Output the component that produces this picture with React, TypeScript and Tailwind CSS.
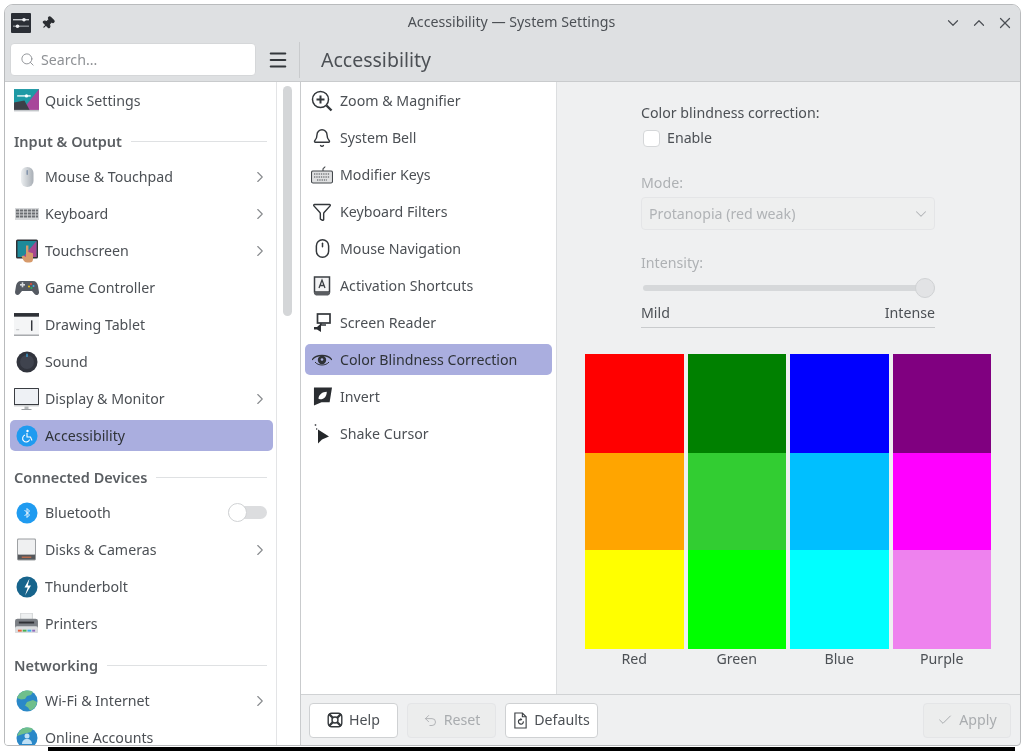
import React from 'react';
import { Search, Menu, Pin, ChevronRight, ChevronDown, ChevronUp, X, Undo2, Check, Bell, Funnel, Mouse } from 'lucide-react';

const ic = 'w-[22px] h-[22px]';

const SettingsLogo = () => (
  <svg viewBox="0 0 20 20" className="w-[20px] h-[20px]">
    <rect width="20" height="20" rx="1" fill="#2a2e35" />
    <rect x="2" y="6" width="16" height="1.4" fill="#c9ccd0" />
    <circle cx="13" cy="6.7" r="1.8" fill="#eef0f2" />
    <rect x="2" y="12.5" width="16" height="1.4" fill="#8b8f95" />
    <circle cx="6.5" cy="13.2" r="1.8" fill="#eef0f2" />
  </svg>
);

const QuickIcon = () => (
  <svg viewBox="0 0 24 22" className="w-[25px] h-[23px]">
    <rect x="0" y="0" width="24" height="20" fill="#1e9aa5" />
    <path d="M24 0V20H8Z" fill="#a8479a" />
    <path d="M0 13L10 11L15 20H0Z" fill="#3c4048" />
    <rect x="3" y="6" width="13" height="1.2" fill="#fff" />
    <circle cx="12" cy="6.6" r="1.6" fill="#fff" />
    <rect x="0" y="20" width="24" height="1.5" fill="#c3c7ca" />
  </svg>
);

const MouseIcon = () => (
  <svg viewBox="0 0 22 22" className={ic}>
    <defs>
      <linearGradient id="mg" x1="0" x2="1" y1="0" y2="0">
        <stop offset="0" stopColor="#eceff1" />
        <stop offset="1" stopColor="#a9afb6" />
      </linearGradient>
    </defs>
    <rect x="5" y="1" width="12.5" height="20" rx="6" fill="url(#mg)" />
    <rect x="10.5" y="4" width="1.4" height="5" rx="0.7" fill="#7d8fa8" />
  </svg>
);

const KeyboardIcon = () => (
  <svg viewBox="0 0 24 22" className="w-[24px] h-[22px]">
    <rect x="0" y="5" width="24" height="12" fill="#d5d7d9" />
    <g fill="#6a6d71">
      <rect x="1" y="6.5" width="22" height="2" />
      <rect x="1" y="9.5" width="22" height="2" />
      <rect x="1" y="12.5" width="22" height="2" />
    </g>
    <g fill="#d5d7d9">
      <rect x="4" y="6" width="0.8" height="9" />
      <rect x="8" y="6" width="0.8" height="9" />
      <rect x="12" y="6" width="0.8" height="9" />
      <rect x="16" y="6" width="0.8" height="9" />
      <rect x="20" y="6" width="0.8" height="9" />
    </g>
  </svg>
);

const TouchIcon = () => (
  <svg viewBox="0 0 24 24" className="w-[24px] h-[24px]">
    <rect x="1" y="0.5" width="22" height="19" rx="1.5" fill="#2f3136" />
    <rect x="2.5" y="2" width="19" height="16" fill="#1e8a9a" />
    <path d="M21.5 2V18H8Z" fill="#a8478f" />
    <path d="M11 6.5h2.4V13l4.6 1.2V20a3.5 3.5 0 0 1-3.5 3.5H12a4 4 0 0 1-3.4-2L6.5 17.5l1.6-1L11 18Z" fill="#d79a6b" />
  </svg>
);

const GameIcon = () => (
  <svg viewBox="0 0 24 22" className="w-[24px] h-[22px]">
    <path d="M6 4h12c3 0 4.5 2 5 5l1 6c.3 3-3 4-4.5 2L17 14H7l-2.5 3C3 19 0 18 0 15l1-6c.5-3 2-5 5-5Z" fill="#555a62" />
    <rect x="5" y="7" width="5" height="1.6" fill="#d8dadc" />
    <rect x="6.7" y="5.3" width="1.6" height="5" fill="#d8dadc" />
    <circle cx="16" cy="7" r="1" fill="#e74c3c" />
    <circle cx="18.5" cy="9" r="1" fill="#3daee9" />
    <circle cx="14" cy="9.5" r="1" fill="#f1c40f" />
    <circle cx="16.4" cy="11" r="1" fill="#27ae60" />
  </svg>
);

const TabletIcon = () => (
  <svg viewBox="0 0 24 22" className="w-[25px] h-[23px]">
    <rect x="0" y="0" width="24" height="22" fill="#f4f5f6" />
    <rect x="0" y="0" width="24" height="3.5" fill="#2d3036" />
    <rect x="0" y="20.6" width="24" height="1.4" fill="#a5a8ab" />
    <rect x="16.3" y="7" width="1.4" height="10" fill="#33363b" />
    <rect x="2" y="15.5" width="3" height="1" fill="#c4c6c8" />
  </svg>
);

const SoundIcon = () => (
  <svg viewBox="0 0 22 22" className={ic}>
    <circle cx="11" cy="11" r="10.5" fill="#31343d" />
    <circle cx="11" cy="11" r="7" fill="#3f434e" />
    <rect x="10.4" y="2.5" width="1.2" height="3.5" rx="0.6" fill="#3daee9" />
  </svg>
);

const DisplayIcon = () => (
  <svg viewBox="0 0 25 24" className="w-[25px] h-[24px]">
    <rect x="0" y="1" width="25" height="17" rx="0.5" fill="#3a3d42" />
    <rect x="1" y="2" width="23" height="15" fill="#eef1f5" />
    <rect x="0" y="18" width="25" height="1.5" fill="#cfd1d3" />
    <rect x="10.5" y="19.5" width="4" height="2.5" fill="#b5b8ba" />
    <rect x="7.5" y="22" width="10" height="1" fill="#9da0a3" />
  </svg>
);

const AccessIcon = () => (
  <svg viewBox="0 0 22 22" className={ic}>
    <circle cx="11" cy="11" r="10.5" fill="#1f9bf0" />
    <circle cx="11.5" cy="6" r="1.2" fill="#fff" />
    <path d="M11 8v4h3.5l1.5 3.5M9 10a3.6 3.6 0 1 0 4.6 4.6" stroke="#fff" strokeWidth="1.1" fill="none" />
  </svg>
);

const BluetoothIcon = () => (
  <svg viewBox="0 0 22 22" className={ic}>
    <circle cx="11" cy="11" r="10.5" fill="#1f9bf0" />
    <path d="M8.5 8l5 5-2.5 2.5v-9L13.5 9l-5 5" stroke="#fff" strokeWidth="0.9" fill="none" />
  </svg>
);

const DiskIcon = () => (
  <svg viewBox="0 0 20 23" className="w-[19px] h-[23px]">
    <rect x="0" y="0" width="20" height="23" rx="1.5" fill="#9a9da0" />
    <rect x="1" y="1" width="18" height="16" rx="1" fill="#eff0f1" />
    <rect x="1" y="17" width="18" height="5" fill="#55585c" />
    <rect x="5" y="19" width="10" height="1.2" fill="#d6734a" />
  </svg>
);

const BoltIcon = () => (
  <svg viewBox="0 0 22 22" className={ic}>
    <circle cx="11" cy="11" r="10.5" fill="#17648c" />
    <path d="M13.5 2.5L8.5 11.5h3.2L9 19.5l6-10h-3.2Z" fill="#fff" />
  </svg>
);

const PrinterIcon = () => (
  <svg viewBox="0 0 24 22" className="w-[23px] h-[21px]">
    <rect x="6" y="0" width="12" height="8" fill="#eef0f1" stroke="#b4b7ba" strokeWidth="0.6" />
    <rect x="0" y="6" width="24" height="15" rx="2.5" fill="#7b7f85" />
    <rect x="4" y="9" width="16" height="2" fill="#2f3136" />
    <rect x="0" y="14" width="24" height="7" rx="2" fill="#dcdee0" />
    <rect x="3" y="17.5" width="4" height="2" fill="#e5603c" />
    <rect x="8" y="17.5" width="4" height="2" fill="#4caf50" />
    <rect x="13" y="17.5" width="4" height="2" fill="#3daee9" />
    <rect x="18" y="17.5" width="3" height="2" fill="#8e6bbf" />
  </svg>
);

const GlobeIcon = () => (
  <svg viewBox="0 0 22 22" className={ic}>
    <circle cx="11" cy="11" r="10.5" fill="#2a88c8" />
    <path d="M5 2.5C8 0 14 0 17 2l-2 3-4 1-2 3-4 .5L1 8c.5-2 2-4 4-5.5Z" fill="#6fbf8c" />
    <path d="M11 12l6-2 4 2c-.5 4-3 7.5-7 8.5l-2-3-3-2Z" fill="#6fbf8c" />
  </svg>
);

const AccountsIcon = () => (
  <svg viewBox="0 0 22 22" className={ic}>
    <circle cx="11" cy="11" r="10.5" fill="#2a88c8" />
    <path d="M5 2.5C8 0 14 0 17 2l-2 3-8 2-6 2c.5-2 2-4 4-6.5Z" fill="#6fbf8c" />
    <circle cx="11" cy="9" r="2.5" fill="#bfe0f5" />
    <path d="M6 17c0-3 2-5 5-5s5 2 5 5Z" fill="#bfe0f5" />
  </svg>
);

const ZoomGlyph = () => (
  <svg viewBox="0 0 22 22" className={ic} fill="none" stroke="#33373b" strokeWidth="1.5">
    <circle cx="9.5" cy="9.5" r="8" />
    <path d="M5.5 9.5h8M9.5 5.5v8" strokeWidth="2" />
    <path d="M15.5 15.5l5 5" strokeWidth="2.4" />
  </svg>
);

const ModKeysGlyph = () => (
  <svg viewBox="0 0 22 22" className={ic} fill="none" stroke="#44484c" strokeWidth="1.1">
    <path d="M12 7V5c0-1 2-1 2-2.5" />
    <rect x="0.5" y="7" width="21" height="12" rx="1.5" fill="#dfe0e1" />
    <path d="M3 10h16M3 13h16M6 16h10" strokeDasharray="1.3 1" />
  </svg>
);

const ActivationGlyph = () => (
  <svg viewBox="0 0 18 20" className="w-[18px] h-[20px]" fill="none">
    <rect x="1.5" y="1" width="15" height="15" fill="#f3f3f4" stroke="#3b3f43" strokeWidth="1.5" />
    <path d="M6 12l3-8 3 8M7 9.5h4" stroke="#3b3f43" strokeWidth="1.3" />
    <path d="M1 16h16v2l-2 1.5H3L1 18Z" fill="#5a5d61" />
  </svg>
);

const ReaderGlyph = () => (
  <svg viewBox="0 0 18 20" className="w-[18px] h-[20px]" fill="none">
    <rect x="4.5" y="1" width="12.5" height="9" stroke="#33373b" strokeWidth="1.7" />
    <path d="M8 10v2h5" stroke="#33373b" strokeWidth="1.5" />
    <path d="M1 14h3l4-3.5V19l-4-2.5H1Z" fill="#2a2d31" />
  </svg>
);

const EyeGlyph = () => (
  <svg viewBox="0 0 20 14" className="w-[20px] h-[14px]">
    <path d="M0 7C4 1 16 1 20 7" fill="none" stroke="#2f3236" strokeWidth="1.3" />
    <path d="M3 9C6 13 14 13 17 9" fill="none" stroke="#2f3236" strokeWidth="1" />
    <circle cx="10" cy="7" r="4.2" fill="#2f3236" />
    <circle cx="10" cy="6.5" r="1.3" fill="#aaaedf" />
  </svg>
);

const InvertGlyph = () => (
  <svg viewBox="0 0 20 20" className="w-[19px] h-[19px]">
    <path d="M1 0.500h19L17.500 16H9L1 19.500Z" fill="#2a2d31" />
    <path d="M14.500 5c0 4.500-2.500 8-7 8-.8 0-1.400-.3-1.800-.8C6 8 10 5 14.500 5Z" fill="#fff" />
  </svg>
);

const CursorGlyph = () => (
  <svg viewBox="0 0 16 20" className="w-[16px] h-[20px]">
    <circle cx="1.500" cy="1" r="0.9" fill="#55585c" />
    <path d="M4 5.500V19.500L8 15.500L15 12.500Z" fill="#24272a" />
    <rect x="2.200" y="4" width="1" height="2" fill="#55585c" />
  </svg>
);

const HelpGlyph = () => (
  <svg viewBox="0 0 16 16" className="w-[16px] h-[16px]" fill="none" stroke="#33373b">
    <circle cx="8" cy="8" r="3" strokeWidth="1.4" />
    <rect x="1.2" y="1.2" width="13.6" height="13.6" rx="3.5" strokeWidth="1.4" />
    <path d="M2 2l4 4M14 2l-4 4M2 14l4-4M14 14l-4-4" strokeWidth="2.4" />
  </svg>
);

const DefaultsGlyph = () => (
  <svg viewBox="0 0 16 18" className="w-[15px] h-[17px]" fill="none" stroke="#3b3f43" strokeWidth="1.2">
    <path d="M2 1h8l4 4v12H2Z" />
    <path d="M10 1v4h4" />
    <path d="M11 10a2.600 2.600 0 1 1-2.600-2.300" strokeWidth="1.3" />
    <path d="M8 6l2 1.800-2 1.600Z" fill="#3b3f43" stroke="none" />
  </svg>
);

type NavItem = { label: string; icon: React.ReactNode; arrow?: boolean; selected?: boolean; toggle?: boolean };

const NavRow = ({ label, icon, arrow, selected, toggle }: NavItem) => (
  <div className="h-[37px] flex items-center">
    <div className={`flex items-center h-[31px] w-[263px] ml-[5px] pl-[4px] rounded-[5px] ${selected ? 'bg-[#aaaedf] text-[#2f3338]' : 'text-[#4c5055]'}`}>
      <span className="w-[25px] flex justify-center shrink-0">{icon}</span>
      <span className="ml-[6px] flex-1 text-[14.2px]">{label}</span>
      {arrow && <ChevronRight className="w-[18px] h-[18px] mr-[4px] text-[#888b8e]" strokeWidth={1.5} />}
      {toggle && (
        <span className="relative w-[39px] h-[13px] mr-[6px] rounded-full bg-[#dcdddf]">
          <span className="absolute left-0 top-[-3px] w-[19px] h-[19px] rounded-full bg-white border border-[#d0d2d4]" />
        </span>
      )}
    </div>
  </div>
);

const SectionHead = ({ label, h }: { label: string; h: string }) => (
  <div className={`flex items-center pl-[9px] pr-[9px] gap-[9px] ${h}`}>
    <span className="text-[14.5px] font-semibold text-[#5b5f63] whitespace-nowrap">{label}</span>
    <span className="flex-1 h-[1px] bg-[#dfe1e3]" />
  </div>
);

const subItems: { label: string; icon: React.ReactNode; selected?: boolean }[] = [
  { label: 'Zoom & Magnifier', icon: <ZoomGlyph /> },
  { label: 'System Bell', icon: <Bell className="w-[20px] h-[20px] text-[#33373b]" strokeWidth={1.7} /> },
  { label: 'Modifier Keys', icon: <ModKeysGlyph /> },
  { label: 'Keyboard Filters', icon: <Funnel className="w-[20px] h-[20px] text-[#33373b]" strokeWidth={1.7} /> },
  { label: 'Mouse Navigation', icon: <Mouse className="w-[21px] h-[21px] text-[#33373b]" strokeWidth={1.7} /> },
  { label: 'Activation Shortcuts', icon: <ActivationGlyph /> },
  { label: 'Screen Reader', icon: <ReaderGlyph /> },
  { label: 'Color Blindness Correction', icon: <EyeGlyph />, selected: true },
  { label: 'Invert', icon: <InvertGlyph /> },
  { label: 'Shake Cursor', icon: <CursorGlyph /> },
];

const swatches = [
  ['#ff0000', '#008000', '#0000ff', '#800080'],
  ['#ffa500', '#32cd32', '#00bfff', '#ff00ff'],
  ['#ffff00', '#00ff00', '#00ffff', '#ee82ee'],
];
const swatchHeights = ['h-[99px]', 'h-[97px]', 'h-[99px]'];

const Btn = ({ icon, label, disabled, w }: { icon: React.ReactNode; label: string; disabled?: boolean; w: string }) => (
  <div className={`flex items-center justify-center gap-[6px] h-[35px] rounded-[4px] border text-[14.2px] ${w} ${disabled ? 'border-[#e4e5e7] bg-[#eceded] text-[#a9acaf]' : 'border-[#cfd1d3] bg-white text-[#4c5055]'}`}>
    {icon}
    <span>{label}</span>
  </div>
);

export default function App() {
  return (
    <div className="w-[1024px] h-[751px] overflow-hidden bg-white pt-[4px] pl-[4px] pr-[3px] blur-[0.4px]" style={{ fontFamily: '"Noto Sans", sans-serif' }}>
      <div className="h-[742px] flex flex-col rounded-t-[9px] rounded-b-[4px] border border-[#b9bbbd] overflow-hidden bg-[#eff0f1]">
        {/* titlebar */}
        <div className="h-[33px] shrink-0 flex items-center bg-[#dee0e2] relative">
          <div className="ml-[6px] mt-[3px] flex items-center gap-[10px]">
            <SettingsLogo />
            <Pin className="w-[14px] h-[14px] rotate-45 text-[#2a2d31] fill-[#2a2d31]" />
          </div>
          <span className="flex-1 text-center text-[14.2px] text-[#4c5055] mt-[1px] pl-[24px]">Accessibility — System Settings</span>
          <div className="flex items-center gap-[8px] mr-[6px] mt-[3px] text-[#4c5055]">
            <ChevronDown className="w-[18px] h-[18px]" strokeWidth={1.6} />
            <ChevronUp className="w-[18px] h-[18px]" strokeWidth={1.6} />
            <X className="w-[18px] h-[18px]" strokeWidth={1.6} />
          </div>
        </div>
        {/* toolbar */}
        <div className="h-[44px] shrink-0 flex items-center bg-[#dee0e2] border-b border-[#c9cbcd]">
          <div className="w-[295px] shrink-0 flex items-center border-r border-[#c9cbcd] h-[36px]">
            <div className="ml-[5px] w-[246px] h-[33px] rounded-[4px] bg-white border border-[#d5d7d9] flex items-center pl-[9px] gap-[6px] text-[#8e9195]">
              <Search className="w-[15px] h-[15px]" strokeWidth={1.5} />
              <span className="text-[14.2px]">Search...</span>
            </div>
            <Menu className="ml-[11px] w-[22px] h-[22px] text-[#33373b]" strokeWidth={2.1} />
          </div>
          <span className="ml-[21px] text-[19.5px] text-[#4c5055]">Accessibility</span>
        </div>
        {/* body */}
        <div className="flex-1 min-h-0 flex">
          <div className="w-[296px] shrink-0 flex bg-white border-r border-[#c9cbcd]">
            <div className="w-[272px] shrink-0 overflow-hidden border-r border-[#e3e4e6]">
              <NavRow label="Quick Settings" icon={<QuickIcon />} />
              <SectionHead label="Input & Output" h="h-[39px] pt-[6px]" />
              <NavRow label="Mouse & Touchpad" icon={<MouseIcon />} arrow />
              <NavRow label="Keyboard" icon={<KeyboardIcon />} arrow />
              <NavRow label="Touchscreen" icon={<TouchIcon />} arrow />
              <NavRow label="Game Controller" icon={<GameIcon />} />
              <NavRow label="Drawing Tablet" icon={<TabletIcon />} />
              <NavRow label="Sound" icon={<SoundIcon />} />
              <NavRow label="Display & Monitor" icon={<DisplayIcon />} arrow />
              <NavRow label="Accessibility" icon={<AccessIcon />} selected />
              <SectionHead label="Connected Devices" h="h-[40px] pt-[7px]" />
              <NavRow label="Bluetooth" icon={<BluetoothIcon />} toggle />
              <NavRow label="Disks & Cameras" icon={<DiskIcon />} arrow />
              <NavRow label="Thunderbolt" icon={<BoltIcon />} />
              <NavRow label="Printers" icon={<PrinterIcon />} />
              <SectionHead label="Networking" h="h-[40px] pt-[7px]" />
              <NavRow label="Wi-Fi & Internet" icon={<GlobeIcon />} arrow />
              <NavRow label="Online Accounts" icon={<AccountsIcon />} />
            </div>
            <div className="flex-1 pt-[4px] pl-[6px]">
              <div className="w-[9px] h-[230px] rounded-full bg-[#d4d6d8]" />
            </div>
          </div>
          <div className="flex-1 min-w-0 flex flex-col">
            <div className="flex-1 min-h-0 flex">
              <div className="w-[256px] shrink-0 bg-white border-r border-[#dcdee0]">
                {subItems.map((it) => (
                  <div key={it.label} className="h-[37px] flex items-center">
                    <div className={`flex items-center h-[31px] w-[247px] ml-[4px] pl-[5px] rounded-[5px] ${it.selected ? 'bg-[#aaaedf] text-[#2f3338]' : 'text-[#4c5055]'}`}>
                      <span className="w-[24px] flex justify-center shrink-0">{it.icon}</span>
                      <span className="ml-[6px] text-[14.2px]">{it.label}</span>
                    </div>
                  </div>
                ))}
              </div>
              <div className="flex-1 min-w-0 pl-[28px] pt-[21px]">
                <div className="w-[294px] ml-[56px]">
                  <div className="text-[14.2px] text-[#4c5055] h-[20px] leading-[20px]">Color blindness correction:</div>
                  <div className="flex items-center gap-[7px] mt-[5px] ml-[2px] h-[20px]">
                    <span className="w-[17px] h-[17px] rounded-[4px] bg-white border border-[#d5d7d9]" />
                    <span className="text-[14.2px] text-[#4c5055]">Enable</span>
                  </div>
                  <div className="mt-[25px] text-[14.2px] text-[#aeb1b4] h-[20px] leading-[20px]">Mode:</div>
                  <div className="mt-[4px] h-[33px] rounded-[4px] border border-[#e4e5e7] bg-[#eeefef] flex items-center justify-between pl-[7px] pr-[4px] text-[#b0b3b6]">
                    <span className="text-[14.2px]">Protanopia (red weak)</span>
                    <ChevronDown className="w-[18px] h-[18px]" strokeWidth={1.4} />
                  </div>
                  <div className="mt-[23px] text-[14.2px] text-[#aeb1b4] h-[20px] leading-[20px]">Intensity:</div>
                  <div className="relative mt-[5px] h-[20px] flex items-center">
                    <div className="w-full ml-[2px] h-[6px] rounded-full bg-[#d6d8da]" />
                    <span className="absolute right-0 top-0 w-[20px] h-[20px] rounded-full bg-[#e2e3e5] border border-[#d0d2d4]" />
                  </div>
                  <div className="flex justify-between text-[14.2px] text-[#4c5055] h-[24px] items-center mt-[3px]">
                    <span>Mild</span>
                    <span>Intense</span>
                  </div>
                  <div className="h-[1px] bg-[#c9cbcd] mt-[2px]" />
                </div>
                <div className="w-[406px] mt-[26px]">
                  {swatches.map((row, i) => (
                    <div key={i} className={`flex gap-[4px] ${swatchHeights[i]}`}>
                      {row.map((c) => (
                        <div key={c} className="flex-1 bg-[var(--c)]" style={{ '--c': c } as React.CSSProperties} />
                      ))}
                    </div>
                  ))}
                  <div className="flex gap-[4px] text-[14.2px] text-[#4c5055] mt-[-1px]">
                    <span className="flex-1 text-center">Red</span>
                    <span className="flex-1 text-center">Green</span>
                    <span className="flex-1 text-center">Blue</span>
                    <span className="flex-1 text-center">Purple</span>
                  </div>
                </div>
              </div>
            </div>
            <div className="h-[51px] shrink-0 border-t border-[#d0d2d4] flex items-center pl-[8px] pr-[9px] gap-[9px]">
              <Btn icon={<HelpGlyph />} label="Help" w="w-[89px]" />
              <Btn icon={<Undo2 className="w-[15px] h-[15px]" strokeWidth={1.4} />} label="Reset" disabled w="w-[89px]" />
              <Btn icon={<DefaultsGlyph />} label="Defaults" w="w-[93px]" />
              <div className="flex-1" />
              <Btn icon={<Check className="w-[16px] h-[16px]" strokeWidth={1.5} />} label="Apply" disabled w="w-[88px]" />
            </div>
          </div>
        </div>
      </div>
      <div className="h-[4px] ml-[44px] mr-[6px] mt-[1px] bg-black" />
    </div>
  );
}
